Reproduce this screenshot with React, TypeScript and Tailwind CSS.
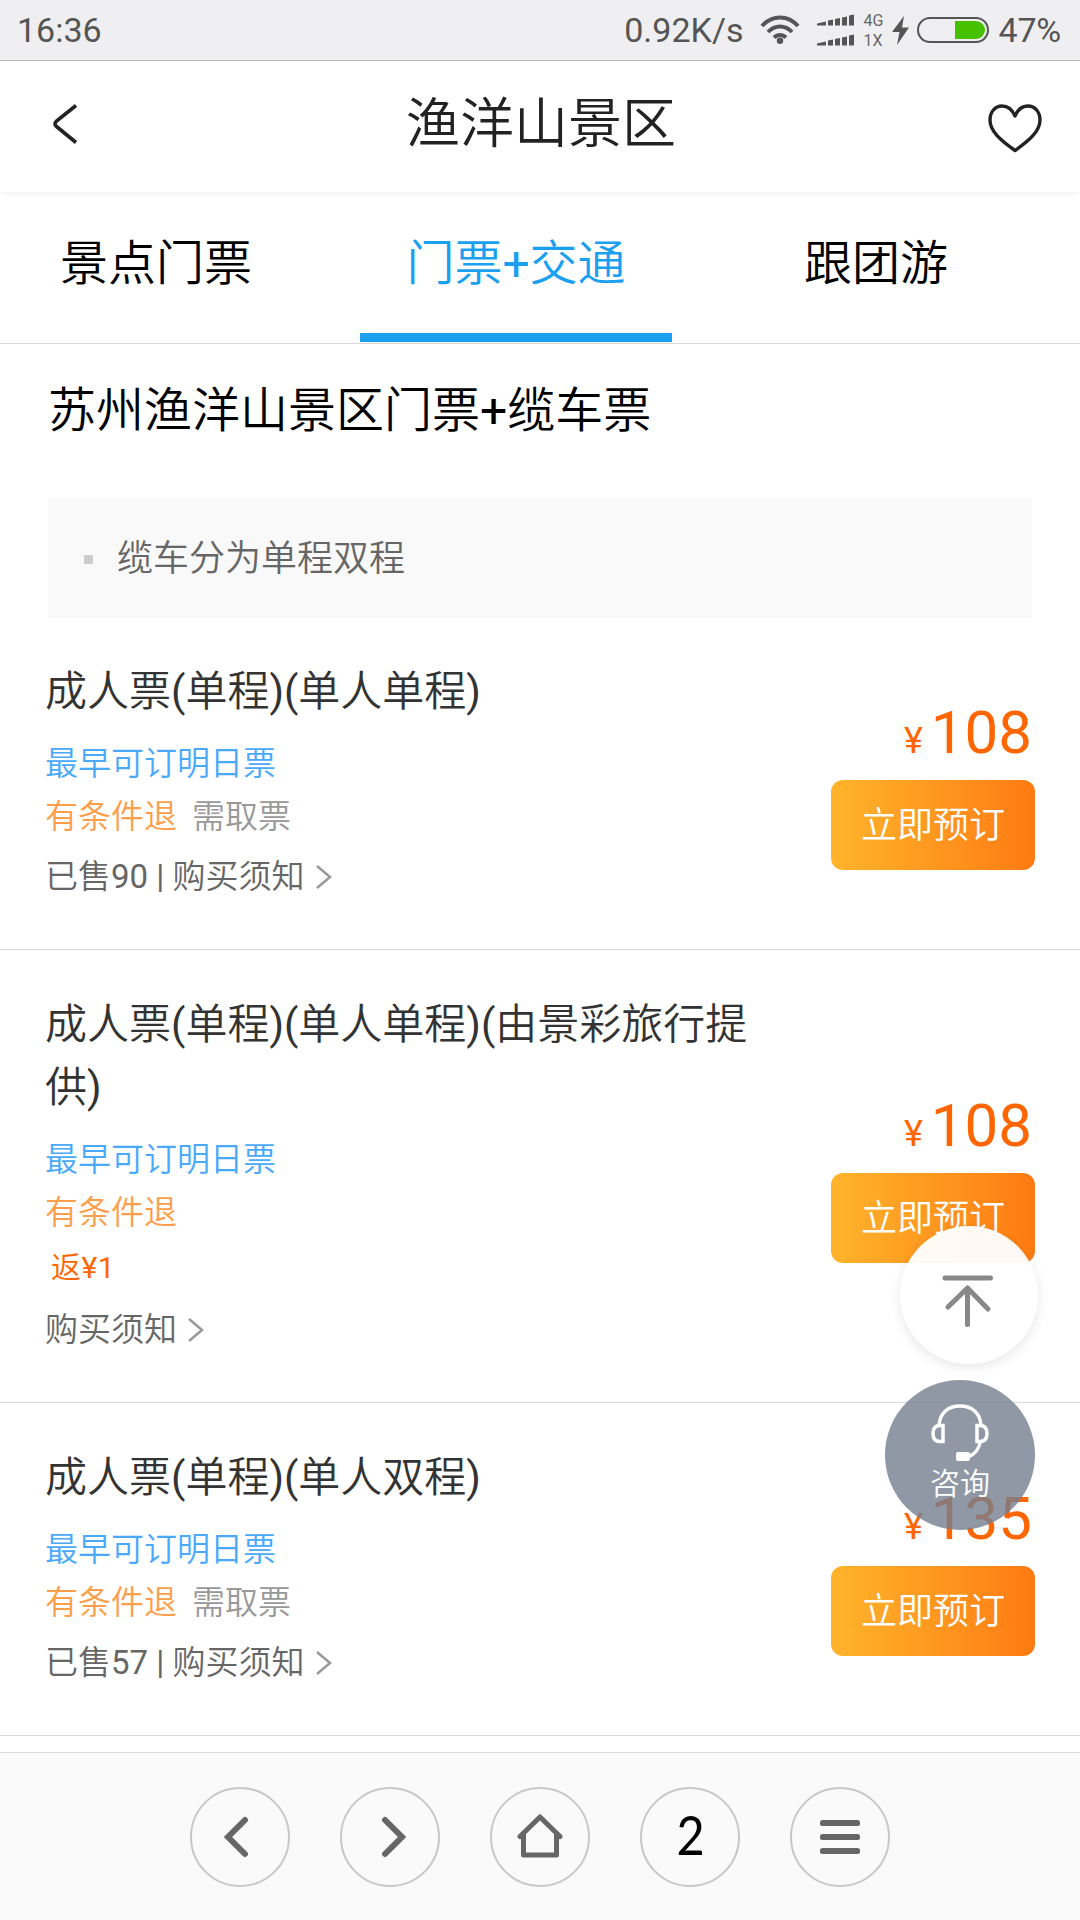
import React from "react";

type Ticket = {
  title: string;
  rebate?: string;
  pickup?: boolean;
  sold?: number;
  price: number;
};

const tickets: Ticket[] = [
  { title: "成人票(单程)(单人单程)", pickup: true, sold: 90, price: 108 },
  { title: "成人票(单程)(单人单程)(由景彩旅行提供)", rebate: "返¥1", price: 108 },
  { title: "成人票(单程)(单人双程)", pickup: true, sold: 57, price: 135 },
];

function SignalBars() {
  return (
    <svg width="37" height="12" viewBox="0 0 37 12" fill="#555" className="block">
      <path d="M0 9.5 9 7.5V11.500H0ZM11 6.500 16 5.500V11.500H11ZM18 5 23 4V11.500H18ZM25 3.500 30 2.500V11.500H25ZM32 1.500 37 .5V11.500H32Z" />
    </svg>
  );
}

function StatusBar() {
  return (
    <div className="flex h-[61px] shrink-0 items-center border-b border-[#b9b9bb] bg-[#efeff1] pr-[19px] pl-[17px] text-[34px] leading-none text-[#555]">
      <span>16:36</span>
      <div className="ml-auto flex items-center">
        <span>0.92K/s</span>
        <svg className="ml-[17px]" width="40" height="30" viewBox="0 0 40 30" fill="none" stroke="#555" strokeWidth="4">
          <path d="M2 11C12-.5 28-.5 38 11M8 17C15 9.500 25 9.500 32 17M14 22.500C17.500 19 22.500 19 26 22.500" />
          <circle cx="20" cy="25.800" r="3.200" fill="#555" stroke="none" />
        </svg>
        <div className="ml-[17px] flex flex-col gap-[8px]">
          <SignalBars />
          <SignalBars />
        </div>
        <div className="mt-[2px] ml-[9px] flex w-[22px] flex-col text-[16px] leading-[20px] text-[#666]">
          <span>4G</span>
          <span>1X</span>
        </div>
        <svg className="ml-[7px]" width="18" height="30" viewBox="0 0 18 30" fill="#555">
          <path d="M12 1 0 17H7.500L5 30 17 12.500H10Z" />
        </svg>
        <div className="ml-[7px] flex h-[26px] w-[72px] justify-end rounded-full border-2 border-[#555] p-[2px]">
          <div className="w-[30px] rounded-r-full bg-[#46c100]" />
        </div>
        <span className="ml-[9px] tracking-[-0.2px]">47%</span>
      </div>
    </div>
  );
}

function Header() {
  return (
    <header className="flex h-[131px] shrink-0 items-center justify-between bg-white pr-[38px] pl-[40px] shadow-[0_4px_6px_-2px_rgba(0,0,0,0.06)]">
      <svg className="mb-[6px]" width="54" height="40" viewBox="0 0 54 40" fill="none" stroke="#222" strokeWidth="3.600">
        <path d="M36 1.500 16.500 17Q13.500 20 16.500 22.500L36 38.500" />
      </svg>
      <h1 className="mb-[4px] text-[54px] leading-none text-[#222]">渔洋山景区</h1>
      <svg className="mt-[4px]" width="54" height="49" viewBox="0 0 54 49" fill="none" stroke="#222" strokeWidth="3.400" strokeLinejoin="round">
        <path d="M27 12C24 5 19 2 14 2 7 2 2 8 2 16 2 27 12 36 27 46.500 42 36 52 27 52 16 52 8 47 2 40 2 35 2 30 5 27 12Z" />
      </svg>
    </header>
  );
}

function Tabs() {
  const base = "flex w-[312px] justify-center pt-[42px] text-[48px] leading-[60px]";
  return (
    <nav className="flex h-[152px] shrink-0 gap-12 border-b border-[#d9d9d9] pb-[1px]">
      <span className={base}>景点门票</span>
      <span className={base + " border-b-[9px] border-[#1a9ff1] text-[#1a9ff1]"}>门票+交通</span>
      <span className={base}>跟团游</span>
    </nav>
  );
}

function TicketRow({ t }: { t: Ticket }) {
  return (
    <section className="flex shrink-0 items-center justify-between border-b border-[#d9d9d9] px-[45px]">
      <div className="w-[710px] pt-[43px] pb-[46px]">
        <h3 className="text-[42px] leading-[63px] text-[#333]">{t.title}</h3>
        <p className="mt-[14px] text-[33px] leading-[53px] text-[#4ba9fb]">最早可订明日票</p>
        <p className="flex gap-[15px] text-[33px] leading-[53px]">
          <span className="text-[#ff9e4a]">有条件退</span>
          {t.pickup && <span className="text-[#999]">需取票</span>}
        </p>
        {t.rebate && <p className="mt-[2px] mb-[9px] pl-[6px] text-[30px] leading-[53px] tracking-[0.5px] text-[#ff6600]">{t.rebate}</p>}
        <p className={(t.rebate ? "" : "mt-[7px] ") + "flex items-center text-[33px] leading-[53px] text-[#666]"}>
          <span>
            {t.sold !== undefined && `已售${t.sold} | `}购买须知
          </span>
          <svg className="ml-[11px]" width="16" height="24" viewBox="0 0 16 24" fill="none" stroke="#999" strokeWidth="2.500">
            <path d="M1 1 14 12 1 23" />
          </svg>
        </p>
      </div>
      <div className="flex w-[204px] flex-col">
        <div className="flex h-[83px] items-baseline justify-end gap-[8px] pr-[3px] leading-[71px] text-[#ff6600]">
          <span className="text-[36px]">¥</span>
          <span className="text-[60px]">{t.price}</span>
        </div>
        <button className="h-[90px] rounded-[12px] bg-linear-to-r from-[#ffb42b] to-[#ff7a12] pt-[2px] text-[36px] text-white">立即预订</button>
      </div>
    </section>
  );
}

function ToolButton({ children }: { children: React.ReactNode }) {
  return (
    <button className="flex size-[100px] items-center justify-center rounded-full border-2 border-[#c8c8c8]">{children}</button>
  );
}

function Toolbar() {
  return (
    <footer className="flex h-[168px] shrink-0 items-start justify-center gap-[50px] border-t border-[#d9d9d9] bg-[#fafafa] pt-[34px]">
      <ToolButton>
        <svg className="-ml-[8px]" width="26" height="42" viewBox="0 0 26 42" fill="none" stroke="#666" strokeWidth="6" strokeLinecap="round">
          <path d="M22 4 5 21 22 38" />
        </svg>
      </ToolButton>
      <ToolButton>
        <svg className="ml-[8px]" width="26" height="42" viewBox="0 0 26 42" fill="none" stroke="#666" strokeWidth="6" strokeLinecap="round">
          <path d="M4 4 21 21 4 38" />
        </svg>
      </ToolButton>
      <ToolButton>
        <svg className="-mt-[2px]" width="46" height="44" viewBox="0 0 46 44" fill="none" stroke="#666" strokeWidth="5" strokeLinecap="round" strokeLinejoin="round">
          <path d="M3 22.500 23 3 43 22.500M6.500 20.500V41H39.500V20.500" />
        </svg>
      </ToolButton>
      <ToolButton>
        <span className="mb-[4px] ml-[2px] scale-x-90 font-[Lato] text-[54px] leading-none text-black">2</span>
      </ToolButton>
      <ToolButton>
        <svg width="40" height="34" viewBox="0 0 40 34" fill="#666">
          <rect width="40" height="6" rx="2.500" />
          <rect y="14" width="40" height="6" rx="2.500" />
          <rect y="28" width="40" height="6" rx="2.500" />
        </svg>
      </ToolButton>
    </footer>
  );
}

export default function App() {
  return (
    <div className="relative flex h-[1920px] w-[1080px] flex-col overflow-hidden bg-white font-[Roboto,'Noto_Sans_CJK_SC_DemiLight','Noto_Sans_CJK_SC_Light','Noto_Sans_CJK_SC',sans-serif] font-normal text-black">
      <StatusBar />
      <Header />
      <Tabs />
      <main className="flex min-h-0 flex-1 flex-col overflow-hidden">
        <h2 className="shrink-0 pt-[37px] pl-12 text-[48px] leading-[60px]">苏州渔洋山景区门票+缆车票</h2>
        <div className="mx-12 mt-[57px] -mb-px flex h-[120px] shrink-0 items-center bg-[#f9f9f9] pl-[36px] text-[36px] text-[#666]">
          <span className="mt-[2px] mr-[24px] size-[9px] bg-[#ccc]" />
          <span className="pt-[2px]">缆车分为单程双程</span>
        </div>
        {tickets.map((t) => (
          <TicketRow key={t.title} t={t} />
        ))}
      </main>
      <Toolbar />
      <button className="absolute top-[1226px] left-[900px] flex size-[138px] items-center justify-center rounded-full bg-white/95 shadow-[0_3px_12px_rgba(0,0,0,0.1)]">
        <svg className="mt-[12px] -ml-[2px]" width="52" height="52" viewBox="0 0 52 52" fill="none" stroke="#888" strokeWidth="5" strokeLinecap="round" strokeLinejoin="round">
          <path d="M3 3H48.500M25.500 49.500V13M6 32 25.500 13 46 34" />
        </svg>
      </button>
      <button className="absolute top-[1380px] left-[885px] flex size-[150px] flex-col items-center rounded-full bg-[#747e8e]/80 pt-[23px] text-[30px] leading-[42px] text-white">
        <svg width="60" height="60" viewBox="0 0 60 60" fill="none" stroke="#fff" strokeWidth="3.500">
          <path d="M9 22C10 10 18 3 30 3S50 10 51 22" />
          <path d="M13 22.500V38.500H10C5 38.500 3 35 3 30.500S5 22.500 10 22.500ZM47 22.500V38.500H50C55 38.500 57 35 57 30.500S55 22.500 50 22.500Z" />
          <path d="M50.500 38C49 46 46 51 38 54" />
          <rect x="26" y="49" width="14" height="9" rx="2" fill="#fff" stroke="none" />
        </svg>
        咨询
      </button>
    </div>
  );
}
